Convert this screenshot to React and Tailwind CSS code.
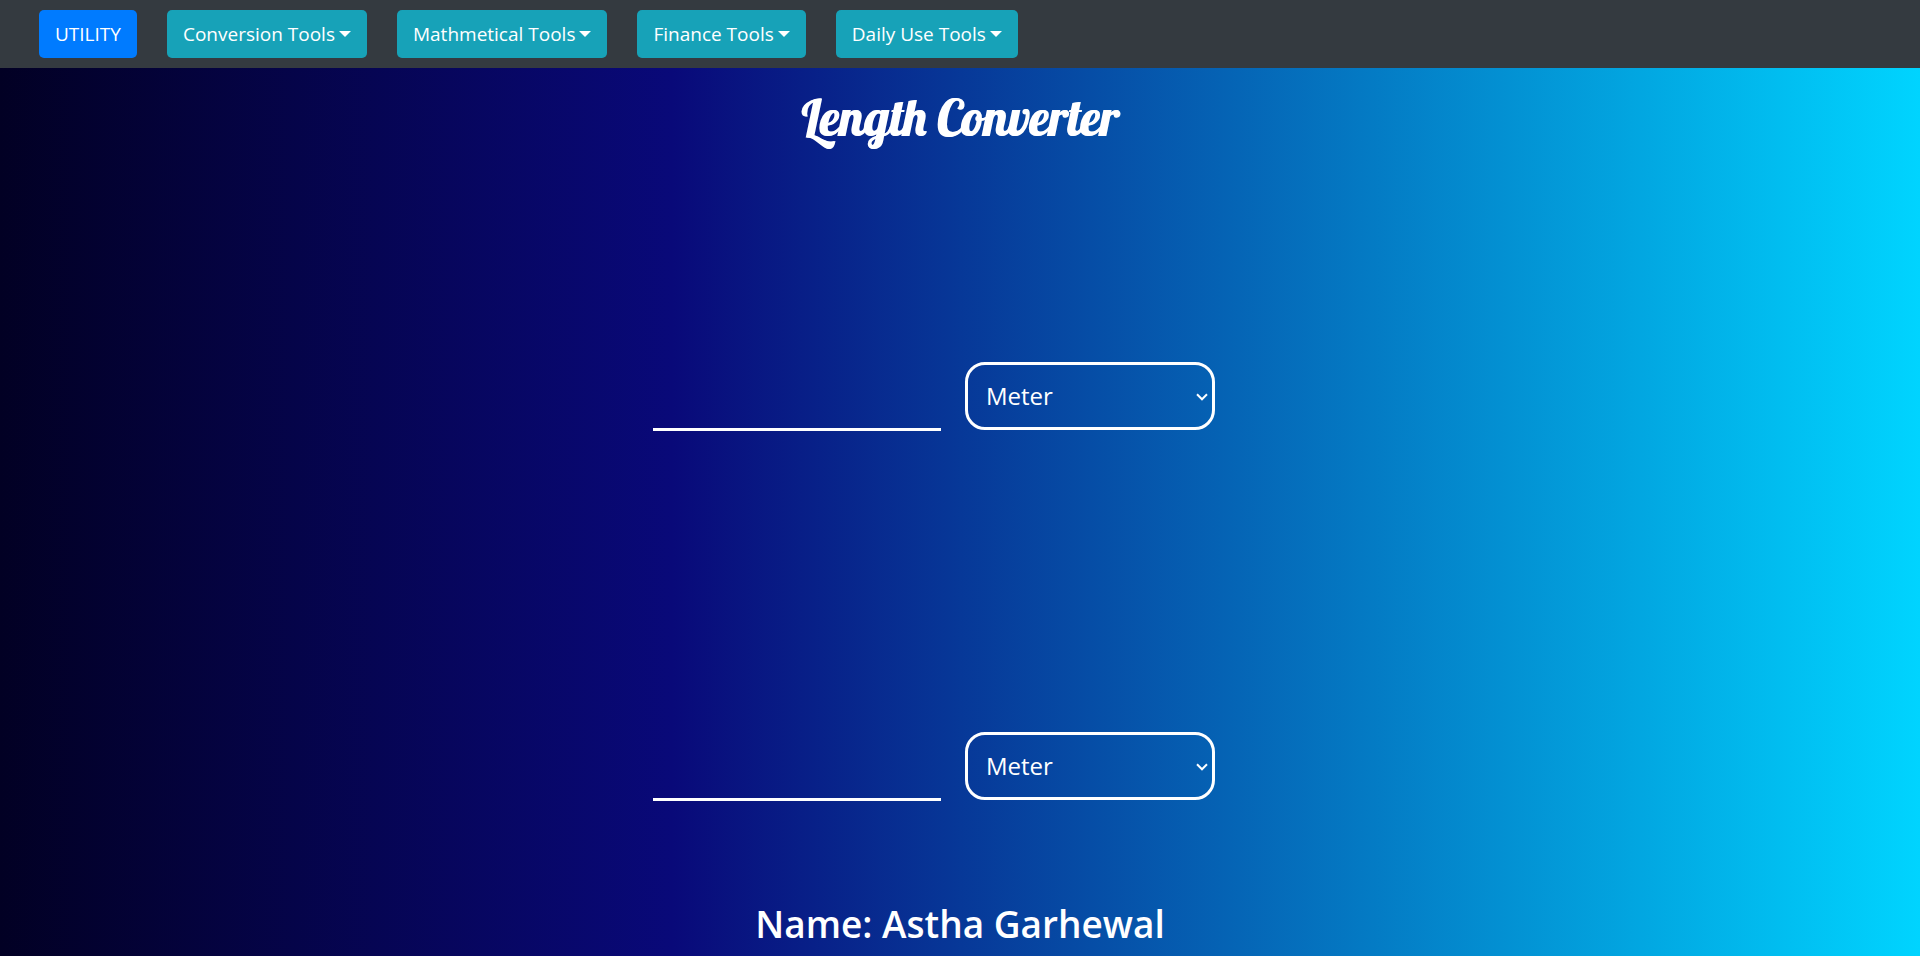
import { useState } from "react";

const MENUS = ["Conversion Tools", "Mathmetical Tools", "Finance Tools", "Daily Use Tools"];

const UNITS = { Meter: 1, Kilometer: 1000, Centimeter: 0.01, Millimeter: 0.001, Mile: 1609.344, Yard: 0.9144, Foot: 0.3048, Inch: 0.0254 };

function Caret() {
  return (
    <svg className="h-[6px] w-3" viewBox="0 0 12 6" fill="currentColor" aria-hidden="true">
      <path d="M0 0h12L6 6z" />
    </svg>
  );
}

function NavBar() {
  return (
    <nav className="flex flex-wrap items-center gap-[30px] bg-[#343a40] px-[39px] py-[10px] text-[19px] leading-[30px] text-white">
      <a href="#home" className="rounded-[5px] bg-[#007bff] px-4 py-[9px]">UTILITY</a>
      {MENUS.map((label) => (
        <button key={label} type="button" className="flex items-center gap-1 rounded-[5px] bg-[#17a2b8] px-4 py-[9px]">
          {label}
          <Caret />
        </button>
      ))}
    </nav>
  );
}

function LengthField({ label, value, onValue, unit, onUnit, readOnly }) {
  return (
    <div className="flex items-start justify-center gap-6 pr-[52px]">
      <input
        type="text"
        aria-label={`${label} length`}
        value={value}
        readOnly={readOnly}
        onChange={(e) => onValue(e.target.value)}
        className="h-[69px] w-72 border-b-[3px] border-white bg-transparent text-center text-[24px] text-white outline-none"
      />
      <div className="relative">
        <select
          aria-label={`${label} unit`}
          value={unit}
          onChange={(e) => onUnit(e.target.value)}
          className="block h-[68px] w-[250px] appearance-none rounded-[20px] border-[3px] border-white bg-transparent px-[18px] text-[24px] text-white outline-none"
        >
          {Object.keys(UNITS).map((name) => (
            <option key={name} className="text-black">{name}</option>
          ))}
        </select>
        <svg
          className="pointer-events-none absolute top-[31px] right-[7px] h-2 w-3"
          viewBox="0 0 12 8"
          fill="none"
          stroke="currentColor"
          strokeWidth="2"
          aria-hidden="true"
        >
          <path d="M1 1.3l5 5 5-5" />
        </svg>
      </div>
    </div>
  );
}

export default function App() {
  const [amount, setAmount] = useState("");
  const [from, setFrom] = useState("Meter");
  const [to, setTo] = useState("Meter");
  const number = parseFloat(amount);
  const result = Number.isNaN(number) ? "" : String((number * UNITS[from]) / UNITS[to]);

  return (
    <div className="flex min-h-screen flex-col bg-[linear-gradient(90deg,rgb(2,0,36)_0%,rgb(9,9,121)_35%,rgb(0,212,255)_100%)] font-['Open_Sans','Noto_Sans',sans-serif]">
      <NavBar />
      <main className="flex flex-col text-white">
        <h1 className="pt-5 text-center font-['Lobster','Liberation_Serif',serif] text-[50px] leading-[60px] font-medium [text-shadow:1px_0_0_white]">
          Length Converter
        </h1>
        <div className="flex flex-col gap-[301px] pt-[214px]">
          <LengthField label="From" value={amount} onValue={setAmount} unit={from} onUnit={setFrom} />
          <LengthField label="To" value={result} onValue={() => {}} unit={to} onUnit={setTo} readOnly />
        </div>
        <h2 className="pt-[99px] text-center text-[37px] leading-[48px] font-semibold">Name: Astha Garhewal</h2>
      </main>
    </div>
  );
}
